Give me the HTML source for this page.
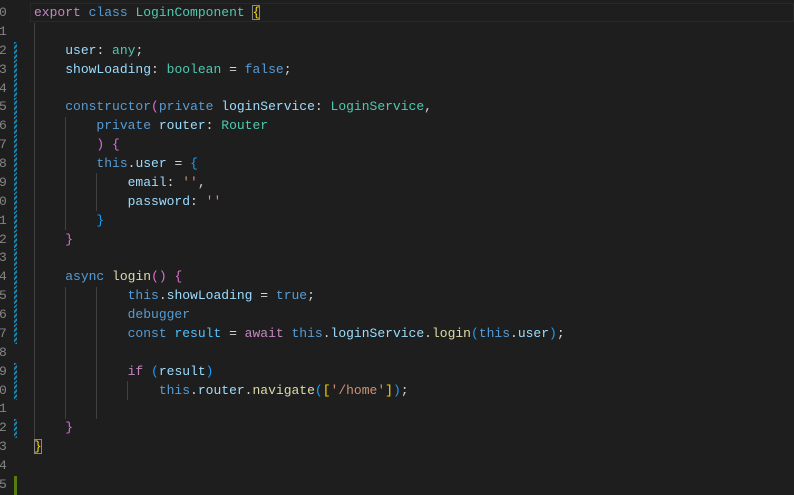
<!DOCTYPE html>
<html><head><meta charset="utf-8"><style>
html,body{margin:0;padding:0;background:#1e1e1e;width:794px;height:492px;overflow:hidden;}
.r{position:absolute;left:0;height:18.88px;line-height:18.88px;font-family:"Liberation Mono",monospace;font-size:13px;white-space:pre;color:#d4d4d4;}
.n{position:absolute;left:-1px;width:10px;color:#858585;font-family:"Liberation Mono",monospace;font-size:13px;line-height:18.88px;}
.c{position:absolute;left:34px;}
.m{position:absolute;left:14px;width:3px;height:18.88px;background:repeating-linear-gradient(135deg,#1b81a8 0 2px,#1e1e1e 2px 3.5px);}
.g{position:absolute;width:1px;background:#404040;}
.k{color:#c586c0}.b{color:#569cd6}.t{color:#4ec9b0}.p{color:#9cdcfe}.f{color:#dcdcaa}.s{color:#ce9178}.y{color:#ffd700}.v{color:#da70d6}.u{color:#179fff}.o{color:#4fc1ff}
</style></head><body>
<div style="position:absolute;left:30px;top:3px;width:764px;height:19px;border:1px solid #282828;box-sizing:border-box"></div>
<div class="g" style="left:34px;top:23px;height:425px"></div>
<div class="g" style="left:65px;top:117px;height:113px"></div>
<div class="g" style="left:96px;top:173px;height:38px"></div>
<div class="g" style="left:65px;top:287px;height:132px"></div>
<div class="g" style="left:96px;top:287px;height:132px"></div>
<div class="g" style="left:127px;top:381px;height:19px"></div>
<div id="w"></div>
<script>
var L=[
'<span class="k">export</span> <span class="b">class</span> <span class="t">LoginComponent</span> <span class="y" style="outline:1px solid #888;outline-offset:-1px">{</span>',
'',
'    <span class="p">user</span>: <span class="t">any</span>;',
'    <span class="p">showLoading</span>: <span class="t">boolean</span> = <span class="b">false</span>;',
'',
'    <span class="b">constructor</span><span class="v">(</span><span class="b">private</span> <span class="p">loginService</span>: <span class="t">LoginService</span>,',
'        <span class="b">private</span> <span class="p">router</span>: <span class="t">Router</span>',
'        <span class="v">)</span> <span class="v">{</span>',
'        <span class="b">this</span>.<span class="p">user</span> = <span class="u">{</span>',
'            <span class="p">email</span>: <span class="s">\'\'</span>,',
'            <span class="p">password</span>: <span class="s">\'\'</span>',
'        <span class="u">}</span>',
'    <span class="v">}</span>',
'',
'    <span class="b">async</span> <span class="f">login</span><span class="v">()</span> <span class="v">{</span>',
'            <span class="b">this</span>.<span class="p">showLoading</span> = <span class="b">true</span>;',
'            <span class="b">debugger</span>',
'            <span class="b">const</span> <span class="o">result</span> = <span class="k">await</span> <span class="b">this</span>.<span class="p">loginService</span>.<span class="f">login</span><span class="u">(</span><span class="b">this</span>.<span class="p">user</span><span class="u">)</span>;',
'',
'            <span class="k">if</span> <span class="u">(</span><span class="p">result</span><span class="u">)</span>',
'                <span class="b">this</span>.<span class="p">router</span>.<span class="f">navigate</span><span class="u">(</span><span class="y">[</span><span class="s">\'/home\'</span><span class="y">]</span><span class="u">)</span>;',
'',
'    <span class="v">}</span>',
'<span class="y" style="outline:1px solid #888;outline-offset:-1px">}</span>',
'',
''];
var mk={2:1,3:1,4:1,5:1,6:1,7:1,8:1,9:1,10:1,11:1,12:1,13:1,14:1,15:1,16:1,17:1,19:1,20:1,22:1};
var h='';
for(var i=0;i<26;i++){var t=(4+i*18.88).toFixed(2);
h+='<div class="r" style="top:'+t+'px;width:794px"><span class="n">'+(i%10)+'</span>'+(mk[i]?'<span class="m"></span>':'')+(i==25?'<span class="m" style="background:#587c0c"></span>':'')+'<span class="c">'+L[i]+'</span></div>';}
document.getElementById('w').innerHTML=h;
</script>
</body></html>
